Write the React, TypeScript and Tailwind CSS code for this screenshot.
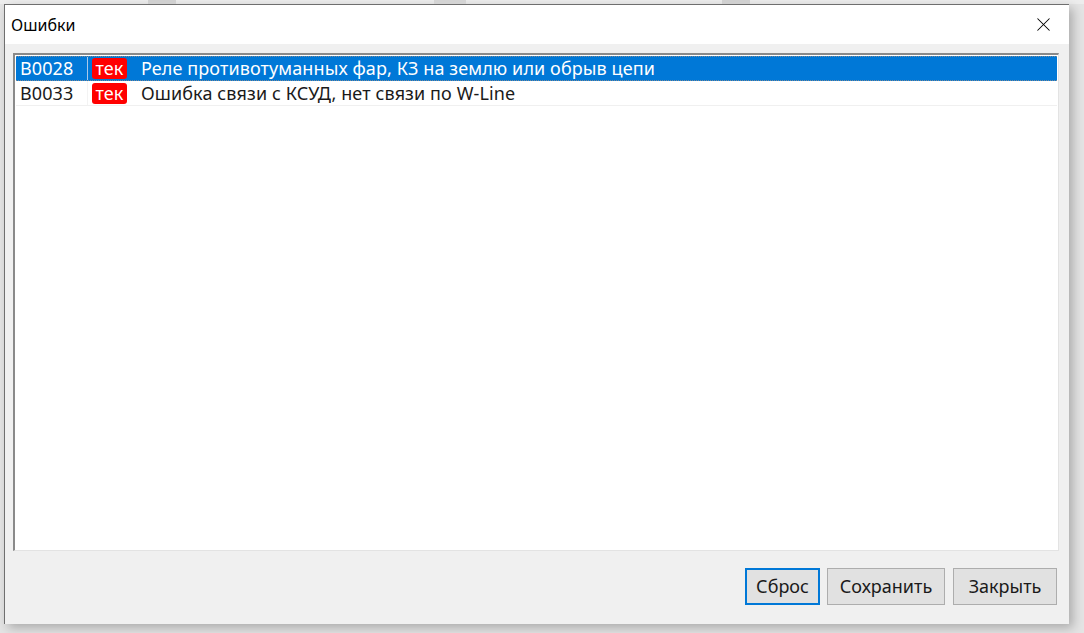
import { X } from 'lucide-react';

const rows = [
  { code: 'B0028', state: 'тек', text: 'Реле противотуманных фар, КЗ на землю или обрыв цепи', selected: true },
  { code: 'B0033', state: 'тек', text: 'Ошибка связи с КСУД, нет связи по W-Line', selected: false },
];

const font = "font-['Segoe_UI','Noto_Sans','Open_Sans',sans-serif]";

export default function App() {
  return (
    <div className={`h-[633px] w-[1084px] overflow-hidden bg-[#e4e4e4] ${font}`}>
      {/* background window edge */}
      <div className="flex h-[4px] bg-[#ededed]">
        <div className="w-[148px]" />
        <div className="w-[28px] bg-[#d0d0d0]" />
        <div className="w-[258px]" />
        <div className="w-[32px] bg-[#d4d4d4]" />
        <div className="w-[256px]" />
        <div className="w-[28px] bg-[#d0d0d0]" />
        <div className="flex-1" />
      </div>

      <div className="ml-[4px] flex h-[620px] w-[1065px] flex-col border-t border-l border-[#6f6f6f] bg-[#f0f0f0] shadow-[4px_4px_10px_rgba(0,0,0,0.25)]">
        {/* title bar */}
        <div className="flex h-[39px] items-center justify-between bg-white pl-[6px] pr-[14px]">
          <span className="text-[16px] text-black">Ошибки</span>
          <X size={23} strokeWidth={1.1} className="text-black" />
        </div>

        {/* list */}
        <div className="ml-[8px] mr-[10px] mt-[9px] h-[498px] border-t-2 border-l-2 border-t-[#8a8a8a] border-l-[#8a8a8a] border-r border-b border-r-[#e3e3e3] border-b-[#e3e3e3] bg-white p-[1px] text-[18px] tracking-[0.1px]">
          {rows.map((r) => (
            <div
              key={r.code}
              className={`flex h-[25px] items-center border-b ${
                r.selected ? 'border-y border-dotted border-[#7d8a96] bg-[#0078d7] text-white' : 'border-[#f0f0f0] text-[#1a1a1a]'
              }`}
            >
              <div className={`flex h-full w-[72px] items-center pl-[4px] ${r.selected ? 'border-r border-[#a9c9ea]' : 'border-r border-[#f3f3f3]'}`}>
                {r.code}
              </div>
              <div className="ml-[4px] flex h-[21px] w-[35px] items-center justify-center rounded-[3px] bg-[#ff0000] text-white">
                {r.state}
              </div>
              <div className="ml-[14px]">{r.text}</div>
            </div>
          ))}
        </div>

        {/* buttons */}
        <div className="mt-[17px] flex justify-end pr-[12px] text-[18px] text-[#1a1a1a]">
          <button className="h-[37px] w-[75px] border-2 border-[#0078d7] bg-[#e1e1e1]">Сброс</button>
          <button className="ml-[7px] h-[37px] w-[118px] border border-[#adadad] bg-[#e1e1e1]">Сохранить</button>
          <button className="ml-[8px] h-[37px] w-[104px] border border-[#adadad] bg-[#e1e1e1]">Закрыть</button>
        </div>
      </div>
    </div>
  );
}
